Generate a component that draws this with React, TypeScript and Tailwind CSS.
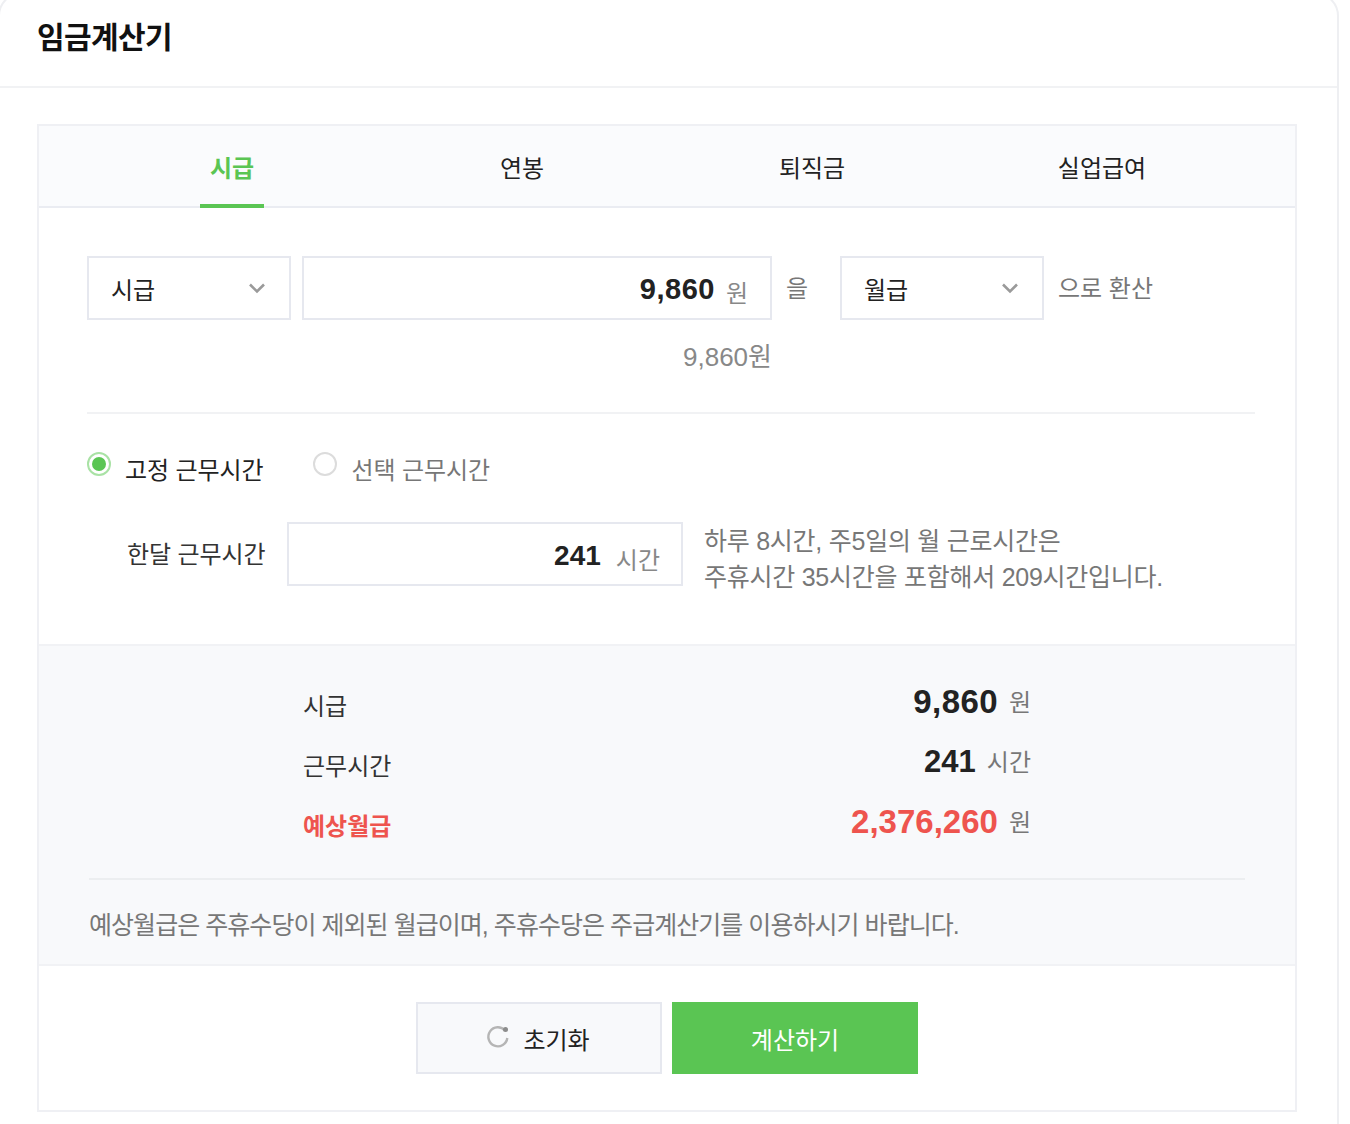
import React from "react";

const F = "font-['Liberation_Sans','Noto_Sans_CJK_KR',sans-serif]";

function Chevron() {
  return (
    <svg width="18" height="12" viewBox="0 0 18 12" fill="none" className="shrink-0">
      <path d="M2 2.5 L9 9.5 L16 2.5" stroke="#9a9a9a" strokeWidth="2.6" />
    </svg>
  );
}

function Select({ label }: { label: string }) {
  return (
    <div className="flex h-[64px] w-[204px] shrink-0 items-center justify-between border-2 border-[#e6e8ef] bg-white pl-[22px] pr-[23px]">
      <span className="pt-[5px] text-[24px] text-[#222]">{label}</span>
      <Chevron />
    </div>
  );
}

function Row({ label, value, unit, red, small }: { label: string; value: string; unit: string; red?: boolean; small?: boolean }) {
  const size = small ? "text-[31px] text-[#222]" : red ? "text-[33px] text-[#ee544e]" : "text-[33px] tracking-[0.4px] text-[#222]";
  return (
    <div className="flex h-[60px] items-center justify-between">
      <span className={red ? "pt-[4px] text-[24px] font-bold text-[#ee544e]" : "pt-[4px] text-[24px] text-[#333]"}>
        {label}
      </span>
      <span className="flex items-center gap-[11px]">
        <span className={`pb-[6px] font-bold ${size}`}>{value}</span>
        <span className="pb-[4px] text-[24px] text-[#777]">{unit}</span>
      </span>
    </div>
  );
}

export default function App() {
  return (
    <div className={`h-[1124px] w-[1350px] overflow-hidden bg-white ${F}`}>
      <div className="-ml-[2px] -mt-[8px] h-[1200px] w-[1341px] rounded-t-[24px] border-2 border-[#eeeff2] bg-white">
        <header className="flex h-[94px] items-start border-b-2 border-[#f1f2f4] pl-[37px] pt-[22px]">
          <h1 className="text-[30px] font-bold leading-[44px] tracking-[-0.6px] text-[#111]">임금계산기</h1>
        </header>

        <main className="ml-[37px] mt-[36px] w-[1260px] border-2 border-[#eff0f4]">
          <nav className="flex h-[82px] border-b-2 border-[#eaecf2] bg-[#fafbfd] pl-[48px]">
            {["시급", "연봉", "퇴직금", "실업급여"].map((t, i) => (
              <div key={t} className="flex w-[290px] justify-center">
                <div
                  className={
                    i === 0
                      ? "-mb-[2px] flex h-[82px] w-[64px] justify-center border-b-4 border-[#5ac553] pt-[25px] text-[24px] font-bold leading-[36px] text-[#5ac553]"
                      : "flex h-[82px] justify-center whitespace-nowrap pt-[25px] text-[24px] leading-[36px] text-[#222]"
                  }
                >
                  {t}
                </div>
              </div>
            ))}
          </nav>

          <section className="px-[48px] pt-[48px]">
            <div className="flex items-start">
              <Select label="시급" />
              <div className="ml-[11px] flex h-[64px] w-[470px] shrink-0 items-center justify-end gap-[11px] border-2 border-[#e6e8ef] pr-[22px]">
                <span className="pt-[4px] text-[29px] font-bold tracking-[0.5px] text-[#222]">9,860</span>
                <span className="pt-[12px] text-[24px] text-[#888]">원</span>
              </div>
              <span className="ml-[14px] w-[54px] shrink-0 pt-[15px] text-[24px] leading-[36px] text-[#777]">을</span>
              <Select label="월급" />
              <span className="ml-[14px] pt-[15px] text-[24px] leading-[36px] text-[#777]">으로 환산</span>
            </div>
            <div className="mt-[19px] w-[685px] text-right text-[26px] leading-[36px] text-[#888]">9,860원</div>
            <div className="mt-[37px] h-[2px] w-[1168px] bg-[#f1f2f4]" />

            <div className="mt-[24px] flex items-center">
              <div className="flex h-[24px] w-[24px] items-center justify-center rounded-full border-2 border-[#a9e2a5] bg-white">
                <div className="h-[14px] w-[14px] rounded-full bg-[#5ac553]" />
              </div>
              <span className="ml-[14px] pt-[15px] text-[24px] leading-[36px] tracking-[-0.1px] text-[#222]">고정 근무시간</span>
              <div className="ml-[50px] h-[24px] w-[24px] rounded-full border-2 border-[#dcdcdc] bg-white" />
              <span className="ml-[14px] pt-[15px] text-[24px] leading-[36px] tracking-[-0.1px] text-[#777]">선택 근무시간</span>
            </div>

            <div className="mt-[33px] flex items-start">
              <span className="ml-[40px] flex h-[64px] w-[160px] shrink-0 items-center pt-[2px] text-[24px] tracking-[-0.1px] text-[#333]">한달 근무시간</span>
              <div className="flex h-[64px] w-[396px] shrink-0 items-center justify-end gap-[15px] border-2 border-[#e6e8ef] pr-[21px]">
                <span className="pt-[4px] text-[28px] font-bold text-[#222]">241</span>
                <span className="pt-[14px] text-[24px] text-[#888]">시간</span>
              </div>
              <p className="ml-[21px] whitespace-nowrap pt-[1px] text-[25px] leading-[36px] tracking-[-0.25px] text-[#777]">
                하루 8시간, 주5일의 월 근로시간은
                <br />
                주휴시간 35시간을 포함해서 209시간입니다.
              </p>
            </div>
            <div className="h-[49px]" />
          </section>

          <section className="h-[322px] border-y-2 border-[#f1f2f5] bg-[#f8f9fb] px-[50px] pt-[29px]">
            <div className="ml-[214px] w-[728px]">
              <Row label="시급" value="9,860" unit="원" />
              <Row label="근무시간" value="241" unit="시간" small />
              <Row label="예상월급" value="2,376,260" unit="원" red />
            </div>
            <div className="mt-[23px] h-[2px] w-[1156px] bg-[#eceef0]" />
            <p className="mt-[27px] whitespace-nowrap text-[25px] leading-[36px] tracking-[-0.95px] text-[#777]">
              예상월급은 주휴수당이 제외된 월급이며, 주휴수당은 주급계산기를 이용하시기 바랍니다.
            </p>
          </section>

          <div className="flex h-[144px] justify-center gap-[10px] pt-[36px]">
            <button className="flex h-[72px] w-[246px] items-center justify-center gap-[13px] border-2 border-[#e6e8ef] bg-[#f8f9fb] text-[24px] text-[#222]">
              <svg width="24" height="24" viewBox="0 0 24 24" fill="none" className="-mt-[3px] -ml-[2px]">
                <path d="M19 5.5 A9.5 9.5 0 1 0 21.3 13" stroke="#b5b5b5" strokeWidth="2.4" />
                <circle cx="19.5" cy="4.5" r="2.5" fill="#8c8c8c" />
              </svg>
              <span className="pt-[5px]">초기화</span>
            </button>
            <button className="flex h-[72px] w-[246px] items-center justify-center bg-[#5ac553] text-[24px] text-white">
              <span className="pt-[5px]">계산하기</span>
            </button>
          </div>
        </main>
      </div>
    </div>
  );
}
